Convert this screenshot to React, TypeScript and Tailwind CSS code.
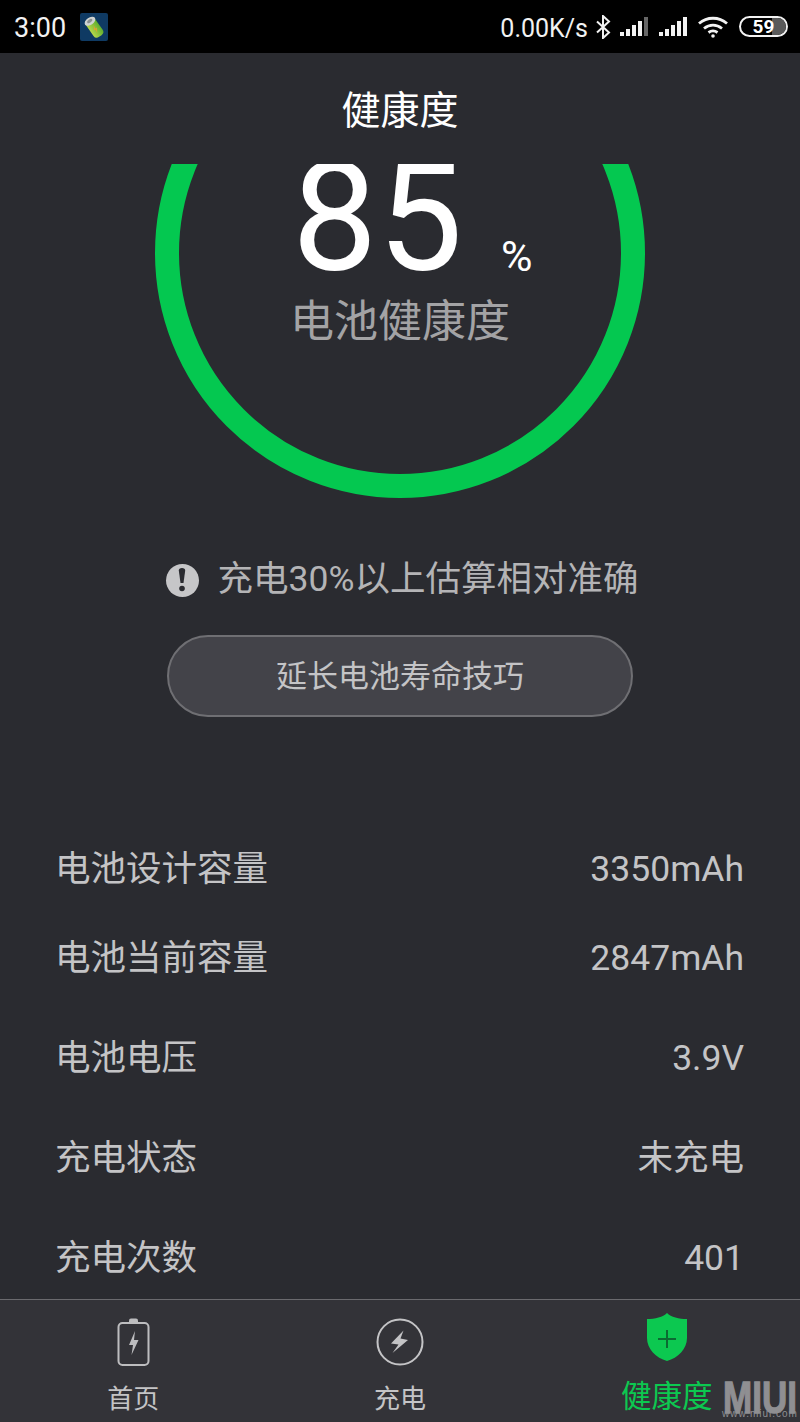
import React from "react";

const rows = [
  { label: "电池设计容量", value: "3350mAh", height: "h-[89px]" },
  { label: "电池当前容量", value: "2847mAh", height: "h-[100px]" },
  { label: "电池电压", value: "3.9V", height: "h-[100px]" },
  { label: "充电状态", value: "未充电", height: "h-[100px]" },
  { label: "充电次数", value: "401", height: "h-[50px]" },
];

// tilted battery from the notification icon
const AppIcon = () => (
  <svg width="28" height="28" viewBox="0 0 28 28">
    <defs>
      <linearGradient id="cell" x1="0" y1="0" x2="1" y2="0">
        <stop offset="0" stopColor="#b7d84a" />
        <stop offset="1" stopColor="#5fae2e" />
      </linearGradient>
    </defs>
    <rect width="28" height="28" rx="2" fill="#0f3a63" />
    <g transform="rotate(-35 14 14)">
      <rect x="8.5" y="4" width="11" height="21" rx="4" fill="url(#cell)" />
      <ellipse cx="14" cy="7" rx="6" ry="3.6" fill="#cfd3d2" />
      <ellipse cx="14" cy="6.6" rx="3" ry="1.6" fill="#8a908f" />
      <path d="M15 12l-3 5h2l-1 4 3-5h-2z" fill="#e8a030" />
    </g>
  </svg>
);

const Signal = ({ dim }: { dim?: boolean }) => (
  <svg width="29" height="20" viewBox="0 0 29 20" fill="#f2f2f2">
    <rect x="0" y="15" width="4" height="4" />
    <rect x="6" y="12" width="4" height="7" />
    <rect x="12" y="8" width="4" height="11" />
    <rect x="18" y="4" width="4" height="15" />
    <rect x="24" y="0" width="4" height="19" fill={dim ? "#666666" : "#f2f2f2"} />
  </svg>
);

const Wifi = () => (
  <svg width="30" height="22" viewBox="0 0 30 22" fill="none" stroke="#f2f2f2" strokeWidth="2.8">
    <path d="M1 7.5C9 .5 21 .5 29 7.5" />
    <path d="M6 12.5c5.500-4.500 12.500-4.500 18 0" />
    <path d="M10.500 16.500c2.800-2 6.200-2 9 0" />
    <circle cx="15" cy="20" r="1.800" fill="#f2f2f2" stroke="none" />
  </svg>
);

const Bluetooth = () => (
  <svg width="16" height="24" viewBox="0 0 16 24" fill="none" stroke="#f2f2f2" strokeWidth="2">
    <path d="M2 6.500l12 11-6 5.500V1l6 5.500-12 11" />
  </svg>
);

const BatteryNav = () => (
  <svg width="34" height="50" viewBox="0 0 34 50" fill="none">
    <path d="M13 3.500q0-2 2-2h5q2 0 2 2v2h-9z" fill="#bdbdbf" />
    <rect x="2.500" y="6" width="30" height="42" rx="4" stroke="#bdbdbf" strokeWidth="2" />
    <path d="M19 14l-6 14h4l-1.500 10 7-15H18z" fill="#bdbdbf" />
  </svg>
);

const BoltNav = () => (
  <svg width="48" height="48" viewBox="0 0 48 48" fill="none">
    <circle cx="24" cy="24" r="22.500" stroke="#c4c4c6" strokeWidth="2" />
    <path d="M27.500 12.500L15 25.500l7.500 1-6 8.500 15.500-13-7.500-1.500z" fill="#c4c4c6" />
  </svg>
);

const ShieldNav = () => (
  <svg width="42" height="50" viewBox="0 0 42 50">
    <path d="M21 1c4 4 12 6 20 6v19c0 11-9 20-20 23C10 46 1 37 1 26V7c8 0 16-2 20-6z" fill="#0cc850" />
    <path d="M21 18v18M12 27h18" stroke="#0b6b32" strokeWidth="2" />
  </svg>
);

const App = () => {
  return (
    <div className="relative flex h-[1422px] w-[800px] flex-col overflow-hidden bg-[#2a2b30] font-['Roboto','Noto_Sans_CJK_SC',sans-serif]">
      <header className="flex h-[53px] shrink-0 items-center bg-black pl-[14px] pr-[12px] text-[#f2f2f2]">
        <span className="pt-[3px] text-[27px] leading-none">3:00</span>
        <span className="ml-[14px] flex">
          <AppIcon />
        </span>
        <div className="ml-auto flex items-center">
          <span className="pt-[3px] text-[25px] leading-none">0.00K/s</span>
          <span className="ml-[7px] flex">
            <Bluetooth />
          </span>
          <span className="ml-[9px] flex">
            <Signal dim />
          </span>
          <span className="ml-[10px] flex">
            <Signal />
          </span>
          <span className="ml-[10px] flex">
            <Wifi />
          </span>
          <span className="relative ml-[11px] flex h-[21px] w-[49px] items-center justify-center overflow-hidden rounded-full border-2 border-[#f2f2f2] text-[19px] font-bold leading-none text-white">
            <span className="absolute inset-y-0 right-0 w-[14px] bg-[#5a5a5a]" />
            <span className="relative">59</span>
          </span>
        </div>
      </header>

      <h1 className="flex h-[111px] shrink-0 items-center justify-center pt-[6px] text-[39px] font-normal leading-none text-white">
        健康度
      </h1>

      <section className="relative h-[334px] shrink-0 overflow-hidden">
        <svg className="absolute left-[155px] top-[-156px]" width="490" height="490" viewBox="0 0 490 490" fill="none">
          <circle cx="245" cy="245" r="233" stroke="#04c850" strokeWidth="24" />
        </svg>
        <div className="absolute left-[292px] top-[-20px] text-[152px] font-normal leading-none text-white">
          <span className="relative top-[-2px]">85</span>
        </div>
        <span className="absolute left-[501px] top-[71px] text-[43px] leading-none text-white">%</span>
        <p className="absolute inset-x-0 top-[136px] text-center text-[44px] leading-none text-[#a3a3a5]">
          电池健康度
        </p>
      </section>

      <div className="mt-[62px] flex h-[40px] shrink-0 items-center justify-center gap-[19px] pl-[4px] text-[#b4b4b6]">
        <span className="flex h-[33px] w-[33px] items-center justify-center rounded-full bg-[#c6c6c8]">
          <svg width="8" height="24" viewBox="0 0 8 24" fill="#2a2b30">
            <path d="M.8 2.500Q.8 0 4 0t3.200 2.500L5.500 15h-3z" />
            <circle cx="4" cy="20.500" r="2.800" />
          </svg>
        </span>
        <span className="text-[35.5px] leading-none">充电30%以上估算相对准确</span>
      </div>

      <div className="mt-[35px] flex shrink-0 justify-center">
        <button
          type="button"
          className="flex h-[82px] w-[466px] items-center justify-center rounded-full border-2 border-[#6f6f73] bg-[#434349] text-[31px] leading-none text-[#c4c4c6]"
        >
          延长电池寿命技巧
        </button>
      </div>

      <ul className="mt-[135px] flex flex-1 flex-col pl-[55px] pr-[56px] text-[35.5px] leading-none text-[#c4c4c6]">
        {rows.map((row) => (
          <li key={row.label} className={`flex shrink-0 items-start justify-between ${row.height}`}>
            <span>{row.label}</span>
            <span>{row.value}</span>
          </li>
        ))}
      </ul>

      <nav className="relative grid h-[123px] shrink-0 grid-cols-3 border-t border-[#6a6a6e] bg-[#333338]">
        <div className="flex flex-col items-center pt-[17px] text-[26px] leading-none text-[#c4c4c6]">
          <BatteryNav />
          <span className="mt-[19px]">首页</span>
        </div>
        <div className="flex flex-col items-center pt-[18px] text-[26px] leading-none text-[#c4c4c6]">
          <BoltNav />
          <span className="mt-[20px]">充电</span>
        </div>
        <div className="flex flex-col items-center pt-[12px] text-[30.5px] leading-none text-[#0cc850]">
          <ShieldNav />
          <span className="mt-[20px]">健康度</span>
        </div>
      </nav>

      <div className="absolute left-[722px] top-[1372px] flex w-[76px] flex-col items-center font-['Liberation_Sans',sans-serif] text-[#8f8f92]">
        <span className="origin-top scale-y-[1.27] text-[35px] font-bold leading-[40px] [-webkit-text-stroke:1px_#8f8f92]">MIUI</span>
        <span className="mt-[-4px] whitespace-nowrap text-[10px] leading-[11px] tracking-[1px]">www.miui.com</span>
      </div>
    </div>
  );
};

export default App;
